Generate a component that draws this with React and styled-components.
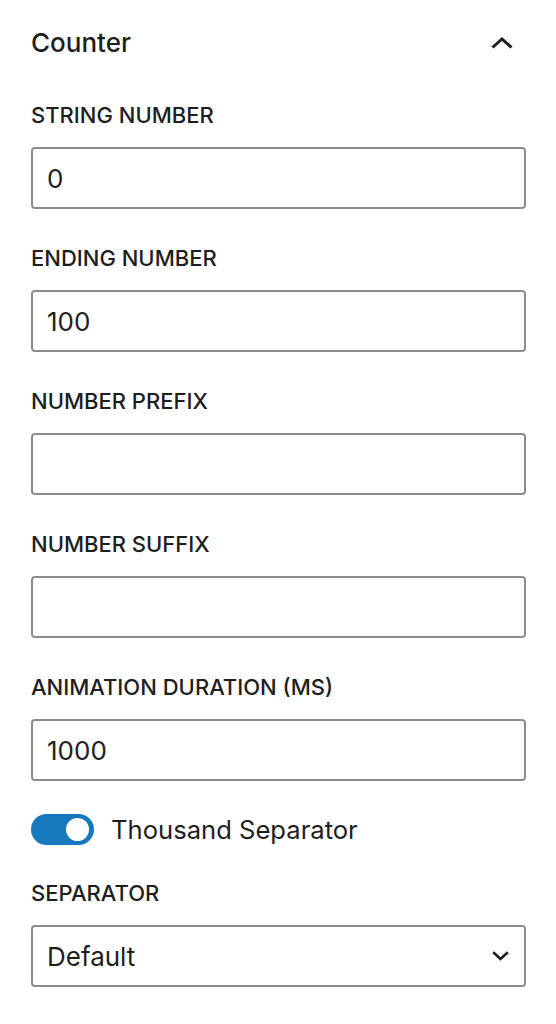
import React from "react";
import styled, { createGlobalStyle } from "styled-components";

const Global = createGlobalStyle`
  html, body { margin: 0; padding: 0; background: #ffffff; }
  body { font-family: Inter, "Noto Sans", sans-serif; color: #1e1e1e; }
  * { box-sizing: border-box; }
`;

const Panel = styled.section`
  width: 556px;
  padding: 27px 30px 36px 31px;
  background: #fff;
`;

const Header = styled.div`
  display: flex;
  align-items: center;
  justify-content: space-between;
  height: 32px;
  margin-bottom: 44px;
`;

const Title = styled.h2`
  margin: 0;
  font-size: 26px;
  font-weight: 500;
  line-height: 32px;
  color: #1e1e1e;
`;

const IconButton = styled.button`
  border: 0;
  background: transparent;
  padding: 0;
  margin-right: 13px;
  width: 22px;
  height: 14px;
  display: flex;
  align-items: center;
  justify-content: center;
  color: #1e1e1e;
`;

const Field = styled.div`
  display: flex;
  flex-direction: column;
  margin-bottom: ${(p) => p.$gap ?? 37}px;
`;

const Label = styled.label`
  font-size: 22px;
  font-weight: 500;
  line-height: 24px;
  text-transform: uppercase;
  color: #1e1e1e;
  margin-bottom: 20px;
`;

const Input = styled.input`
  width: 100%;
  height: 62px;
  border: 2px solid #8c8c8c;
  border-radius: 4px;
  padding: 0 14px;
  font-family: Inter, "Noto Sans", sans-serif;
  font-size: 26px;
  color: #1e1e1e;
  background: #fff;
  outline: none;
`;

const SelectWrap = styled.div`
  position: relative;
  width: 100%;
  height: 62px;
`;

const Select = styled.select`
  width: 100%;
  height: 62px;
  appearance: none;
  -webkit-appearance: none;
  border: 2px solid #8c8c8c;
  border-radius: 4px;
  padding: 0 50px 0 14px;
  font-family: Inter, "Noto Sans", sans-serif;
  font-size: 26px;
  color: #1e1e1e;
  background: #fff;
  outline: none;
`;

const SelectArrow = styled.span`
  position: absolute;
  right: 17px;
  top: 50%;
  transform: translateY(-50%);
  display: flex;
  pointer-events: none;
  color: #1e1e1e;
`;

const ToggleRow = styled.div`
  display: flex;
  align-items: center;
  margin: -4px 0 36px;
  height: 31px;
`;

const Track = styled.span`
  display: inline-flex;
  align-items: center;
  justify-content: ${(p) => (p.$on ? "flex-end" : "flex-start")};
  width: 63px;
  height: 31px;
  border-radius: 16px;
  background: ${(p) => (p.$on ? "#1679bd" : "#fff")};
  padding: 0 5px;
  flex-shrink: 0;
`;

const Thumb = styled.span`
  width: 23px;
  height: 23px;
  border-radius: 50%;
  background: #fff;
`;

const ToggleText = styled.span`
  margin-left: 17px;
  font-size: 25.6px;
  line-height: 32px;
  color: #1e1e1e;
`;

const fields = [
  { label: "String Number", value: "0" },
  { label: "Ending Number", value: "100" },
  { label: "Number Prefix", value: "" },
  { label: "Number Suffix", value: "" },
  { label: "Animation Duration (ms)", value: "1000" },
];

export default function App() {
  return (
    <>
      <Global />
      <Panel>
        <Header>
          <Title>Counter</Title>
          <IconButton aria-label="Collapse">
            <svg width="22" height="12" viewBox="0 0 22 12" fill="none">
              <path d="M1.5 10.5 L11 2 L20.5 10.5" stroke="currentColor" strokeWidth="3" />
            </svg>
          </IconButton>
        </Header>
        {fields.map((f) => (
          <Field key={f.label}>
            <Label>{f.label}</Label>
            <Input defaultValue={f.value} />
          </Field>
        ))}
        <ToggleRow>
          <Track $on>
            <Thumb />
          </Track>
          <ToggleText>Thousand Separator</ToggleText>
        </ToggleRow>
        <Field $gap={0}>
          <Label>Separator</Label>
          <SelectWrap>
            <Select defaultValue="default">
              <option value="default">Default</option>
            </Select>
            <SelectArrow>
              <svg width="17" height="10" viewBox="0 0 17 10" fill="none">
                <path d="M1.2 1.2 L8.5 8 L15.8 1.2" stroke="currentColor" strokeWidth="2.6" />
              </svg>
            </SelectArrow>
          </SelectWrap>
        </Field>
      </Panel>
    </>
  );
}
